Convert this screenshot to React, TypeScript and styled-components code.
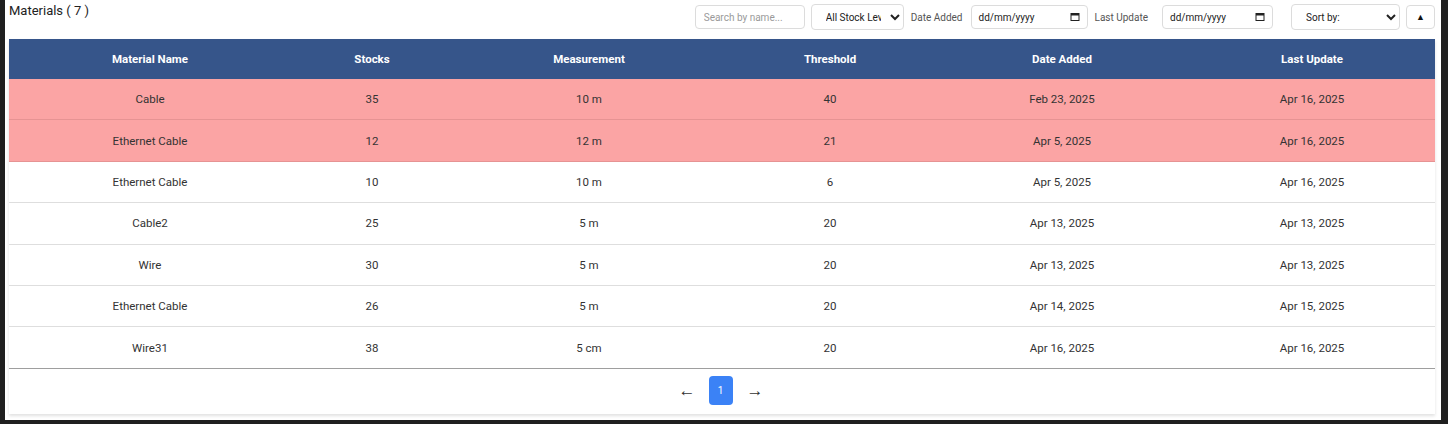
import React from 'react';
import styled, { createGlobalStyle } from 'styled-components';

const GlobalStyle = createGlobalStyle`
    html, body {
        margin: 0;
        padding: 0;
        background: #1f1f1f;
    }
    body {
        font-family: Roboto, "Liberation Sans", Arial, sans-serif;
    }
`;

const Frame = styled.div`
    width: 1436px;
    height: 420px;
    margin-left: 5px;
    background: #fff;
    box-sizing: border-box;
    padding: 0 6px 0 4px;
    overflow: hidden;
`;

const TopBar = styled.div`
    display: flex;
    justify-content: space-between;
    align-items: flex-start;
    height: 39px;
`;

const Title = styled.h2`
    margin: 3px 0 0;
    font-size: 13px;
    font-weight: 400;
    color: #222;
`;

const Controls = styled.div`
    display: flex;
    align-items: center;
    margin-top: 4px;
    height: 26px;
`;

const SearchInput = styled.input`
    width: 110px;
    height: 24px;
    box-sizing: border-box;
    border: 1px solid #dcdcdc;
    border-radius: 4px;
    padding: 0 8px;
    font-family: inherit;
    font-size: 10px;
    color: #333;
    margin-right: 6px;
    &::placeholder { color: #9a9a9a; }
`;

const Select = styled.select<{ $w: number }>`
    width: ${p => p.$w}px;
    height: 26px;
    box-sizing: border-box;
    border: 1px solid #dcdcdc;
    border-radius: 4px;
    background: #fff;
    padding: 0 6px 0 10px;
    font-family: inherit;
    font-size: 10px;
    color: #222;
`;

const Label = styled.span<{ $gap?: number }>`
    font-size: 10px;
    color: #555;
    margin: 0 ${p => p.$gap ?? 8}px 0 7px;
`;

const DateField = styled.div<{ $w: number }>`
    width: ${p => p.$w}px;
    height: 24px;
    box-sizing: border-box;
    border: 1px solid #dcdcdc;
    border-radius: 4px;
    display: flex;
    align-items: center;
    justify-content: space-between;
    padding: 0 7px 0 7px;
    font-size: 10px;
    color: #222;
`;

const Spacer = styled.div<{ $w: number }>`
    width: ${p => p.$w}px;
`;

const SortButton = styled.button`
    width: 29px;
    height: 24px;
    box-sizing: border-box;
    margin-left: 6px;
    border: 1px solid #dcdcdc;
    border-radius: 4px;
    background: #fff;
    font-size: 9px;
    color: #111;
    padding: 0;
`;

const Card = styled.div`
    background: #fff;
    box-shadow: 0 2px 3px rgb(0 0 0 / 12%);
    height: 375px;
`;

const Table = styled.table`
    width: 1426px;
    border-collapse: collapse;
    table-layout: fixed;
`;

const Th = styled.th`
    background: #36558a;
    color: #fff;
    font-size: 11.5px;
    font-weight: 700;
    height: 40px;
    padding: 0;
    text-align: center;
`;

const Tr = styled.tr<{ $low: boolean; $last: boolean }>`
    background: ${p => (p.$low ? '#fba4a4' : '#fff')};
    border-bottom: 1px solid ${p => (p.$last ? '#9e9e9e' : p.$low ? '#e69393' : '#dedede')};
`;

const Td = styled.td`
    height: 40.4px;
    padding: 0;
    text-align: center;
    font-size: 11.5px;
    color: #333;
`;

const Pager = styled.div`
    display: flex;
    justify-content: center;
    align-items: center;
    gap: 14px;
    height: 44px;
    margin-left: -3px;
`;

const Arrow = styled.span`
    font-size: 17px;
    color: #333;
    width: 16px;
    text-align: center;
`;

const PageButton = styled.button`
    width: 24px;
    height: 29px;
    border: 0;
    border-radius: 4px;
    background: #3b82f6;
    color: #fff;
    font-family: inherit;
    font-size: 10px;
    padding: 0;
`;

const Calendar = () => (
    <svg width="10" height="10" viewBox="0 0 10 10">
        <rect x="1" y="1.5" width="8" height="7" fill="none" stroke="#222" strokeWidth="1" />
        <rect x="1" y="1.5" width="8" height="2" fill="#222" />
    </svg>
);

const COLUMNS = [
    { name: 'Material Name', w: 282 },
    { name: 'Stocks', w: 162 },
    { name: 'Measurement', w: 272 },
    { name: 'Threshold', w: 210 },
    { name: 'Date Added', w: 254 },
    { name: 'Last Update', w: 246 },
];

const MATERIALS = [
    { name: 'Cable', stocks: 35, measure: '10 m', threshold: 40, added: 'Feb 23, 2025', updated: 'Apr 16, 2025' },
    { name: 'Ethernet Cable', stocks: 12, measure: '12 m', threshold: 21, added: 'Apr 5, 2025', updated: 'Apr 16, 2025' },
    { name: 'Ethernet Cable', stocks: 10, measure: '10 m', threshold: 6, added: 'Apr 5, 2025', updated: 'Apr 16, 2025' },
    { name: 'Cable2', stocks: 25, measure: '5 m', threshold: 20, added: 'Apr 13, 2025', updated: 'Apr 13, 2025' },
    { name: 'Wire', stocks: 30, measure: '5 m', threshold: 20, added: 'Apr 13, 2025', updated: 'Apr 13, 2025' },
    { name: 'Ethernet Cable', stocks: 26, measure: '5 m', threshold: 20, added: 'Apr 14, 2025', updated: 'Apr 15, 2025' },
    { name: 'Wire31', stocks: 38, measure: '5 cm', threshold: 20, added: 'Apr 16, 2025', updated: 'Apr 16, 2025' },
];

const App = () => {
    return (
        <>
            <GlobalStyle />
            <Frame>
                <TopBar>
                    <Title>Materials ( {MATERIALS.length} )</Title>
                    <Controls>
                        <SearchInput placeholder="Search by name..." />
                        <Select $w={93} defaultValue="all">
                            <option value="all">All Stock Levels</option>
                            <option value="low">Low Stock</option>
                        </Select>
                        <Label>Date Added</Label>
                        <DateField $w={117}>dd/mm/yyyy <Calendar /></DateField>
                        <Label $gap={14}>Last Update</Label>
                        <DateField $w={111}>dd/mm/yyyy <Calendar /></DateField>
                        <Spacer $w={18} />
                        <Select $w={109} defaultValue="">
                            <option value="">Sort by:</option>
                            <option value="name">Name</option>
                        </Select>
                        <SortButton>▲</SortButton>
                    </Controls>
                </TopBar>
                <Card>
                    <Table>
                        <colgroup>
                            {COLUMNS.map(c => <col key={c.name} style={{ width: c.w }} />)}
                        </colgroup>
                        <thead>
                            <tr>
                                {COLUMNS.map(c => <Th key={c.name}>{c.name}</Th>)}
                            </tr>
                        </thead>
                        <tbody>
                            {MATERIALS.map((m, i) => (
                                <Tr key={i} $low={m.stocks <= m.threshold} $last={i === MATERIALS.length - 1}>
                                    <Td>{m.name}</Td>
                                    <Td>{m.stocks}</Td>
                                    <Td>{m.measure}</Td>
                                    <Td>{m.threshold}</Td>
                                    <Td>{m.added}</Td>
                                    <Td>{m.updated}</Td>
                                </Tr>
                            ))}
                        </tbody>
                    </Table>
                    <Pager>
                        <Arrow>←</Arrow>
                        <PageButton>1</PageButton>
                        <Arrow>→</Arrow>
                    </Pager>
                </Card>
            </Frame>
        </>
    );
};

export default App;
